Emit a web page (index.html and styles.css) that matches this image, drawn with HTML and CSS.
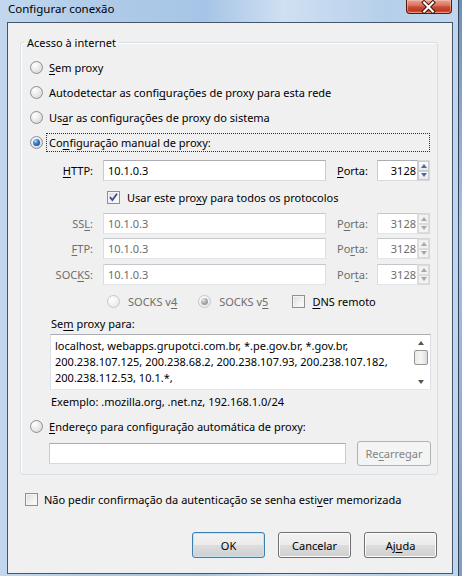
FILE: index.html
```html
<!DOCTYPE html>
<html lang="pt-BR">
<head>
<meta charset="utf-8">
<title>Configurar conexão</title>
<link rel="stylesheet" href="styles.css">
</head>
<body>
<div class="frame">
  <div class="titlebar">
    <span class="title">Configurar conexão</span>
    <div class="close">
      <svg width="46" height="14" viewBox="0 0 46 14">
        <path d="M18.5 2.5 L27.5 11.5 M27.5 2.5 L18.5 11.5" stroke="#3a1008" stroke-width="4.2" stroke-linecap="square"/>
        <path d="M18.5 2.5 L27.5 11.5 M27.5 2.5 L18.5 11.5" stroke="#ffffff" stroke-width="2.2" stroke-linecap="square"/>
      </svg>
    </div>
  </div>
  <div class="client">
    <fieldset class="group">
      <legend>Acesso à internet</legend>
      <div class="opt"><span class="radio"></span><span class="lbl"><u>S</u>em proxy</span></div>
      <div class="opt"><span class="radio"></span><span class="lbl">Autodetectar as confi<u>g</u>urações de proxy para esta rede</span></div>
      <div class="opt"><span class="radio"></span><span class="lbl">Us<u>a</u>r as configurações de proxy do sistema</span></div>
      <div class="opt"><span class="radio on"></span><span class="focus">Co<u>n</u>figuração manual de proxy:</span></div>

      <div class="prow first">
        <span class="plabel"><u>H</u>TTP:</span>
        <div class="tb host">10.1.0.3</div>
        <span class="porta"><u>P</u>orta:</span>
        <div class="tb num">3128</div>
        <div class="spin"><span class="up"></span><span class="down"></span></div>
      </div>
      <div class="allrow"><span class="check on"><svg width="11" height="11" viewBox="0 0 11 11"><path d="M2 5.2 L4.4 8 L9 1.8" fill="none" stroke="#3d4f92" stroke-width="1.8"/></svg></span><span>Usar este pro<u>x</u>y para todos os protocolos</span></div>
      <div class="prow dis">
        <span class="plabel">SS<u>L</u>:</span>
        <div class="tb host">10.1.0.3</div>
        <span class="porta">P<u>o</u>rta:</span>
        <div class="tb num">3128</div>
        <div class="spin"><span class="up"></span><span class="down"></span></div>
      </div>
      <div class="prow dis ftp">
        <span class="plabel"><u>F</u>TP:</span>
        <div class="tb host">10.1.0.3</div>
        <span class="porta">Po<u>r</u>ta:</span>
        <div class="tb num">3128</div>
        <div class="spin"><span class="up"></span><span class="down"></span></div>
      </div>
      <div class="prow dis socks">
        <span class="plabel">SOC<u>K</u>S:</span>
        <div class="tb host">10.1.0.3</div>
        <span class="porta">Por<u>t</u>a:</span>
        <div class="tb num">3128</div>
        <div class="spin"><span class="up"></span><span class="down"></span></div>
      </div>
      <div class="socksrow">
        <span class="radio dis"></span><span class="dtext v4">SOCKS v<u>4</u></span>
        <span class="radio dis on"></span><span class="dtext v5">SOCKS v<u>5</u></span>
        <span class="check"></span><span class="dns"><u>D</u>NS remoto</span>
      </div>
      <div class="nplabel">Se<u>m</u> proxy para:</div>
      <div class="ta">
        <div class="ta-text">
          <div>localhost, webapps.grupotci.com.br, *.pe.gov.br, *.gov.br,</div>
          <div>200.238.107.125, 200.238.68.2, 200.238.107.93, 200.238.107.182,</div>
          <div>200.238.112.53, 10.1.*,</div>
        </div>
        <div class="vscroll">
          <span class="sarrow sup"></span>
          <span class="thumb"></span>
          <span class="sarrow sdown"></span>
        </div>
      </div>
      <div class="example">Exemplo: .mozilla.org, .net.nz, 192.168.1.0/24</div>
      <div class="opt auto"><span class="radio"></span><span class="lbl"><u>E</u>ndereço para configuração automática de proxy:</span></div>
      <div class="autorow">
        <div class="tb url"></div>
        <button class="btn disabled">Re<u>c</u>arregar</button>
      </div>
    </fieldset>
    <div class="authrow"><span class="check"></span><span>Não pedir confirmação da autenticação se senha esti<u>v</u>er memorizada</span></div>
    <div class="buttons">
      <button class="btn default">OK</button>
      <button class="btn">Cancelar</button>
      <button class="btn">Aj<u>u</u>da</button>
    </div>
  </div>
</div>
</body>
</html>
```

FILE: styles.css
```css
* { box-sizing: border-box; }
html, body { margin: 0; padding: 0; }
body {
  width: 462px;
  height: 576px;
  overflow: hidden;
  font-family: "Noto Sans", "Open Sans", sans-serif;
  font-size: 11px;
  color: #000;
  background: linear-gradient(180deg, #6c8fb5 0%, #a9c3de 40%, #7e9fc3 100%);
}
u { text-decoration: underline; text-underline-offset: 2px; }

.frame {
  width: 459px;
  height: 576px;
  display: flex;
  flex-direction: column;
  border-right: 1px solid #33455c;
  background: linear-gradient(90deg, #c3d8ee 0%, #b0cbe8 20%, #a6c5e6 45%, #cfe0f2 62%, #b5cfea 85%, #c0d6ee 100%);
}
.titlebar {
  height: 22px;
  flex: none;
  display: flex;
  justify-content: space-between;
  align-items: flex-start;
  padding-left: 8px;
  padding-right: 6px;
}
.title {
  font-size: 11.5px;
  line-height: 16px;
  padding-top: 1px;
  color: #000;
}
.close {
  width: 46px;
  height: 14px;
  border: 1px solid #571a10;
  border-top: none;
  border-radius: 0 0 4px 4px;
  background: linear-gradient(180deg, #e8a493 0%, #d97560 40%, #c94a32 55%, #c13a20 80%, #d4644a 100%);
  box-shadow: inset 0 0 0 1px rgba(255,210,200,0.45);
  display: flex;
}
.close svg { display: block; margin-left: -1px; }

.client {
  flex: 1;
  margin: 0 5px 2px 7px;
  border: 1px solid #45566b;
  background: #f0f0f0;
  display: flex;
  flex-direction: column;
}

/* group box */
.group {
  margin: 12px 14px 0 12px;
  padding: 0 0 8px 0;
  border: 1px solid #d5dfe5;
  border-radius: 3px;
  box-shadow: inset 1px 1px 0 #ffffff;
  min-width: 0;
}
.group legend {
  padding: 0 3px;
  margin-left: 3px;
  line-height: 15px;
  font-size: 11px;
}

.opt {
  display: flex;
  align-items: center;
  height: 25px;
  padding-left: 9px;
}
.opt:first-of-type { margin-top: 5px; }
.opt .lbl { margin-left: 6px; }
.opt .focus {
  flex: 1;
  margin-left: 3px;
  margin-right: 7px;
  height: 19px;
  line-height: 17px;
  padding-left: 2px;
  border: 1px dotted #303030;
}
.opt.auto { margin-top: 5px; }

/* radio */
.radio {
  width: 13px;
  height: 13px;
  flex: none;
  border-radius: 50%;
  border: 1px solid #8c8f93;
  background: radial-gradient(circle at 35% 30%, #ffffff 0%, #eeeeee 40%, #cfcfcf 100%);
  display: flex;
  align-items: center;
  justify-content: center;
}
.radio.on::after {
  content: "";
  width: 7px;
  height: 7px;
  border-radius: 50%;
  background: radial-gradient(circle at 35% 30%, #b4e2ff 0%, #3a8ad6 35%, #14508f 80%, #0d3a6c 100%);
}
.radio.dis {
  border-color: #c5c7c9;
  background: radial-gradient(circle at 35% 30%, #ffffff 0%, #f2f2f2 50%, #e2e2e2 100%);
}
.radio.dis.on::after {
  background: radial-gradient(circle at 35% 30%, #e8e8e8 0%, #a6a6a6 50%, #8c8c8c 100%);
}

/* checkbox */
.check {
  width: 13px;
  height: 13px;
  flex: none;
  border: 1px solid #8e8f8f;
  background: linear-gradient(135deg, #dcdcdc 0%, #f2f2f2 60%, #ffffff 100%);
  box-shadow: inset 0 0 0 1px #f4f4f4;
  display: flex;
  align-items: center;
  justify-content: center;
}
.check svg { display: block; }

/* proxy rows */
.prow {
  display: flex;
  align-items: center;
  height: 21px;
  padding-left: 19px;
}
.prow.first { margin-top: 5px; }
.prow.ftp { margin-top: 4px; }
.prow.socks { margin-top: 5px; }
.plabel {
  width: 53px;
  text-align: right;
  margin-right: 10px;
}
.tb {
  height: 21px;
  background: #ffffff;
  border: 1px solid #abadb3;
  border-left-color: #c8cbd1;
  border-right-color: #c8cbd1;
  border-bottom-color: #d5d9e0;
  line-height: 19px;
  padding-left: 4px;
  white-space: nowrap;
}
.tb.host { width: 223px; }
.porta { margin-left: 11px; width: 40px; }
.tb.num {
  width: 41px;
  text-align: right;
  padding-left: 0;
  padding-right: 1px;
}
.spin {
  width: 12px;
  height: 21px;
  display: flex;
  flex-direction: column;
  border: 1px solid #d5d7da;
  border-left: none;
  background: #f4f4f4;
}
.spin span {
  flex: 1;
  display: flex;
  align-items: center;
  justify-content: center;
  border: 1px solid #c9ccd0;
  background: linear-gradient(180deg, #fbfbfb, #e9e9e9);
}
.spin span::after {
  content: "";
  width: 0;
  height: 0;
  border-left: 3px solid transparent;
  border-right: 3px solid transparent;
}
.spin .up::after { border-bottom: 4px solid #4d6aa5; }
.spin .down::after { border-top: 4px solid #4d6aa5; }
.prow.dis { color: #6d6d6d; }
.prow.dis .tb { color: #6d6d6d; border-color: #c3c6cb #dadde2 #e1e4e8 #dadde2; }
.prow.dis .spin .up::after { border-bottom-color: #a8a8a8; }
.prow.dis .spin .down::after { border-top-color: #a8a8a8; }
.prow.dis .spin span { background: #f2f2f2; border-color: #dcdcdc; }

.allrow {
  display: flex;
  align-items: center;
  height: 32px;
  padding-left: 86px;
  gap: 7px;
}

.socksrow {
  display: flex;
  align-items: center;
  height: 32px;
  padding-left: 86px;
}
.dtext { color: #6d6d6d; margin-left: 8px; }
.dtext.v4 { margin-right: 21px; }
.dtext.v5 { margin-right: 24px; }
.dns { margin-left: 7px; }

.nplabel {
  line-height: 14px;
  padding-left: 30px;
}
.ta {
  margin: 3px 6px 0 29px;
  height: 56px;
  background: #ffffff;
  border: 1px solid #abadb3;
  border-color: #abadb3 #dbdfe6 #e3e9ef #dbdfe6;
  display: flex;
}
.ta-text {
  flex: 1;
  padding: 3px 0 0 4px;
  line-height: 16px;
  white-space: nowrap;
  overflow: hidden;
}
.vscroll {
  width: 17px;
  display: flex;
  flex-direction: column;
  align-items: center;
  padding: 1px 1px 1px 0;
  background: #ffffff;
}
.sarrow {
  height: 13px;
  width: 16px;
  display: flex;
  align-items: center;
  justify-content: center;
}
.sarrow::after {
  content: "";
  border-left: 3px solid transparent;
  border-right: 3px solid transparent;
}
.sup::after { border-bottom: 4px solid #555; }
.sdown::after { border-top: 4px solid #555; }
.thumb {
  width: 14px;
  height: 15px;
  margin: 1px 0 auto;
  border: 1px solid #969696;
  border-radius: 2px;
  background: linear-gradient(90deg, #eaeaea, #f6f6f6 50%, #dcdcdc);
}
.sdown { margin-top: auto; }

.example {
  margin-top: 5px;
  line-height: 14px;
  padding-left: 30px;
}
.autorow {
  display: flex;
  align-items: center;
  height: 25px;
  margin-top: 2px;
  padding-left: 28px;
}
.tb.url { width: 297px; }

.btn {
  font-family: inherit;
  font-size: 11px;
  color: #000;
  height: 25px;
  padding: 0;
  border: 1px solid #707070;
  border-radius: 3px;
  background: linear-gradient(180deg, #f2f2f2 0%, #ebebeb 48%, #dddddd 52%, #cfcfcf 100%);
  box-shadow: inset 0 0 0 1px #fcfcfc;
  width: 73px;
}
.btn.disabled {
  margin-left: 11px;
  width: 74px;
  height: 25px;
  color: #838383;
  border-color: #adb2b5;
  background: #f4f4f4;
  box-shadow: none;
}
.btn.default {
  border-color: #3c7fb1;
  box-shadow: inset 0 0 0 1px #bfe3f7;
}

.authrow {
  display: flex;
  align-items: center;
  gap: 6px;
  height: 26px;
  margin-top: 11px;
  padding-left: 17px;
}
.buttons {
  display: flex;
  justify-content: flex-end;
  gap: 13px;
  margin-top: 20px;
  padding-right: 15px;
}
.buttons .btn { height: 26px; }
```
